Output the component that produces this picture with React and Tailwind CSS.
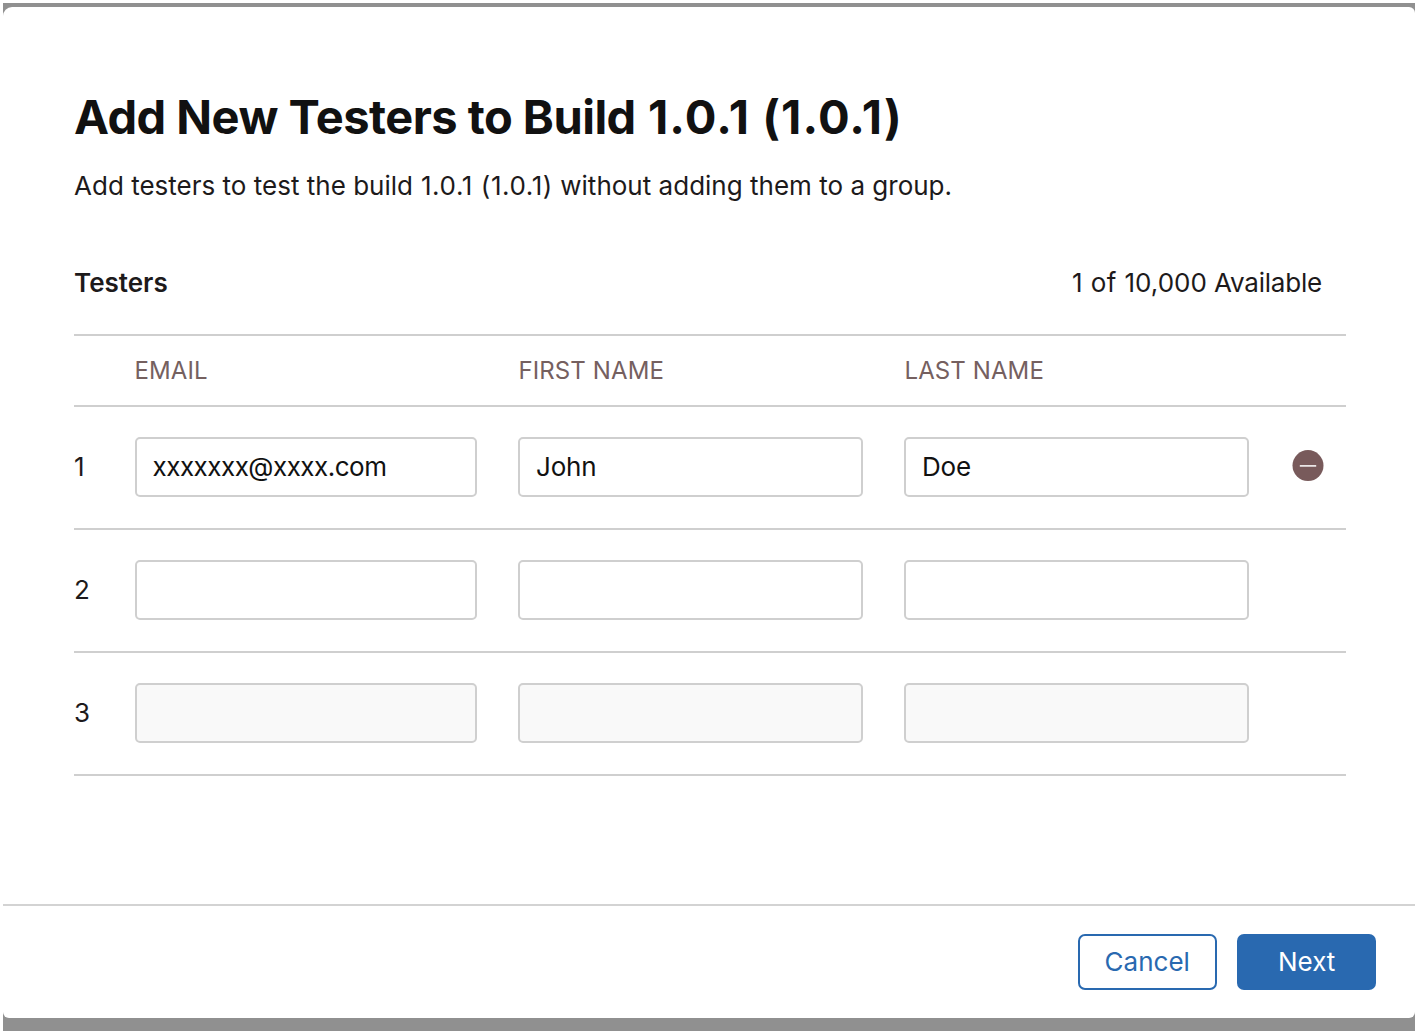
function Field({ value, width, tracking = "tracking-[-0.2px]", off }) {
  return (
    <input
      readOnly
      defaultValue={value}
      className={`${width} ${tracking} h-[60px] shrink-0 rounded-[5px] border-2 border-[#cfcfcf] px-4 pb-px text-[26px] text-[#111] outline-none ${off ? "bg-[#f9f9f9]" : "bg-white"}`}
    />
  );
}

const rows = [
  { n: 1, email: "xxxxxxx@xxxx.com", first: "John", last: "Doe", remove: true },
  { n: 2, email: "", first: "", last: "" },
  { n: 3, email: "", first: "", last: "", off: true },
];

export default function App() {
  return (
    <div className="h-[1034px] w-[1418px] overflow-hidden bg-white px-[3px] pt-[3px] pb-[3px] font-['Inter',sans-serif] text-[#1d1a1b]">
      <div className="flex h-[1028px] w-[1412px] flex-col bg-[#909090] pt-1 pb-[13px]">
        <div className="flex min-h-0 flex-1 flex-col rounded-[6px] rounded-tl-[9px] bg-white">
          <main className="flex h-[897px] flex-col pl-[71px] pr-[69px]">
            <h1 className="mt-[81px] h-[58px] whitespace-nowrap text-[47px] leading-[58px] font-bold tracking-[-0.52px] text-[#111]">
              Add New Testers to Build<span className="tracking-[1.1px]"> 1.0.1 (1.0.1)</span>
            </h1>
            <p className="mt-[22px] h-[36px] whitespace-nowrap text-[26px] leading-[36px] tracking-[0.01px]">
              Add testers to test the build<span className="tracking-[0.6px]"> 1.0.1 (1.0.1)</span> without adding them to a group.
            </p>
            <div className="mt-[61px] flex h-[36px] justify-between pr-[24px] text-[26px] leading-[36px]">
              <h2 className="font-semibold">Testers</h2>
              <span><span className="tracking-[0.4px]">1 of </span>10,000<span className="tracking-[-0.2px]"> Available</span></span>
            </div>
            <div className="mt-[33px] flex h-[73px] items-center border-y-2 border-[#cfcfcf] pl-[60.5px] text-[24px] tracking-[0.1px] text-[#75605f]">
              <span className="w-[384px]">EMAIL</span>
              <span className="w-[386px]">FIRST NAME</span>
              <span>LAST NAME</span>
            </div>
            {rows.map((r) => (
              <div key={r.n} className="flex h-[123.1px] shrink-0 items-center border-b-2 border-[#cfcfcf] pb-px text-[26px]">
                <span className="w-[60.5px] pb-px">{r.n}</span>
                <Field value={r.email} width="w-[342.5px]" tracking="tracking-[-0.5px]" off={r.off} />
                <span className="w-[41px]" />
                <Field value={r.first} width="w-[345px]" off={r.off} />
                <span className="w-[41px]" />
                <Field value={r.last} width="w-[345px]" off={r.off} />
                {r.remove && (
                  <svg className="ml-[43px] -mt-[3px]" width="32" height="32" viewBox="0 0 32 32">
                    <circle cx="16" cy="15.6" r="15.5" fill="#785a5b" />
                    <path d="M7.8 15.9h16.4" stroke="#fff" strokeWidth="1.5" />
                  </svg>
                )}
              </div>
            ))}
          </main>
          <footer className="flex flex-1 justify-end gap-5 border-t-2 border-[#d3d3d3] pt-[28px] pr-[38.6px] text-[26px]">
            <button className="h-[56.4px] w-[139.4px] rounded-[7px] border-2 border-[#2969b0] pb-0.5 text-[#2969b0]">Cancel</button>
            <button className="h-[56.4px] w-[139.5px] rounded-[7px] bg-[#2969b0] pb-0.5 text-white">Next</button>
          </footer>
        </div>
      </div>
    </div>
  );
}
